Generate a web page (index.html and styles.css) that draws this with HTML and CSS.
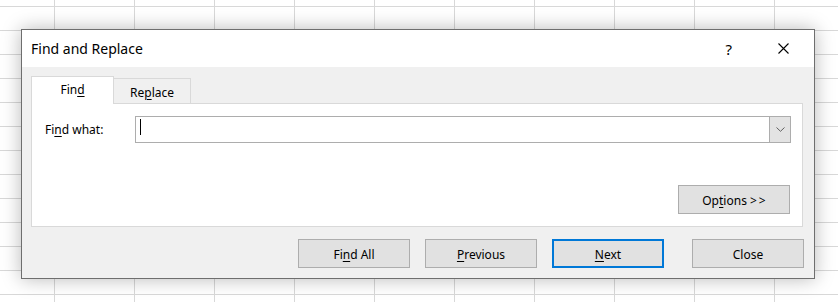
FILE: index.html
```html
<!doctype html>
<html lang="en">
<head>
    <meta charset="UTF-8">
    <title>Find and Replace</title>
    <link rel="stylesheet" href="styles.css">
</head>
<body>
    <div class="dialog">
        <div class="titlebar">
            <span class="title">Find and Replace</span>
            <span class="help">?</span>
            <svg class="close-x" viewBox="0 0 11 11" width="11" height="11">
                <path d="M0.5 0.5 L10.5 10.5 M10.5 0.5 L0.5 10.5" stroke="#000" stroke-width="1.1" fill="none"/>
            </svg>
        </div>

        <div class="content">
            <div class="tabs">
                <div class="tab active">Fin<u>d</u></div>
                <div class="tab">Re<u>p</u>lace</div>
            </div>
            <div class="panel">
                <div class="row">
                    <div class="label">Fi<u>n</u>d what:</div>
                    <div class="combo">
                        <div class="field"><span class="caret"></span></div>
                        <div class="drop">
                            <svg viewBox="0 0 9 5" width="9" height="5">
                                <path d="M0.5 0.5 L4.5 4.3 L8.5 0.5" stroke="#606060" stroke-width="1" fill="none"/>
                            </svg>
                        </div>
                    </div>
                </div>
                <button class="btn options">Op<u>t</u>ions <span class="arrows">&gt;&gt;</span></button>
            </div>
            <div class="actions">
                <button class="btn">Fi<u>n</u>d All</button>
                <button class="btn"><u>P</u>revious</button>
                <button class="btn default"><u>N</u>ext</button>
                <button class="btn close">Close</button>
            </div>
        </div>
    </div>
</body>
</html>
```

FILE: styles.css
```css
html, body {
    margin: 0;
    height: 100%;
}
body {
    font-family: "Noto Sans", "Open Sans", sans-serif;
    font-size: 12px;
    color: #000;
    overflow: hidden;
    background-color: #fff;
    background-image:
        linear-gradient(to right, #d8d8d8 1px, transparent 1px),
        linear-gradient(to bottom, #d8d8d8 1px, transparent 1px);
    background-size: 80px 100%, 100% 24px;
    background-position: 54px 0, 0 6px;
}
u {
    text-decoration-thickness: 1px;
    text-underline-offset: 2px;
}

/* dialog floats over the sheet */
.dialog {
    position: absolute;
    left: 21px;
    top: 29px;
    width: 794px;
    height: 250px;
    box-sizing: border-box;
    border: 1px solid #6e6e6e;
    background: #f0f0f0;
    box-shadow: 0 0 18px rgba(0, 0, 0, 0.28);
    display: flex;
    flex-direction: column;
}
.titlebar {
    height: 37px;
    flex: none;
    background: #fff;
    display: flex;
    align-items: center;
    padding: 0 25px 0 9px;
    font-size: 14px;
}
.titlebar .title {
    flex: 1;
}
.help {
    font-size: 15px;
    margin-right: 46px;
}
.close-x {
    display: block;
}

.content {
    flex: 1;
    padding: 9px 11px 0 9px;
    display: flex;
    flex-direction: column;
}
.tabs {
    display: flex;
    align-items: flex-end;
    position: relative;
    z-index: 1;
    margin-bottom: -1px;
}
.tab {
    box-sizing: border-box;
    width: 78px;
    height: 25px;
    margin-left: -1px;
    margin-bottom: 1px;
    border: 1px solid #d9d9d9;
    border-bottom: none;
    background: #f0f0f0;
    display: flex;
    align-items: center;
    justify-content: center;
    padding-top: 3px;
}
.tab.active {
    width: 83px;
    height: 28px;
    margin-left: 0;
    margin-bottom: 0;
    background: #fff;
    padding-top: 0;
    padding-bottom: 2px;
}

.panel {
    box-sizing: border-box;
    height: 124px;
    background: #fff;
    border: 1px solid #d9d9d9;
    padding: 12px 11px 12px 13px;
    display: flex;
    flex-direction: column;
}
.row {
    display: flex;
    align-items: center;
}
.label {
    width: 90px;
}
.combo {
    flex: 1;
    height: 27px;
    box-sizing: border-box;
    border: 1px solid #adadad;
    display: flex;
}
.field {
    flex: 1;
    padding: 2px 0 0 4px;
}
.caret {
    display: block;
    width: 1px;
    height: 16px;
    background: #000;
}
.drop {
    width: 20px;
    background: #e3e3e3;
    border-left: 1px solid #adadad;
    display: flex;
    align-items: center;
    justify-content: center;
}
.drop svg {
    display: block;
}

.btn {
    box-sizing: border-box;
    width: 112px;
    height: 29px;
    background: #e1e1e1;
    border: 1px solid #adadad;
    font-family: inherit;
    font-size: 12px;
    color: #000;
    padding: 2px 0 0;
}
.options {
    margin-top: auto;
    align-self: flex-end;
    margin-right: 1px;
}
.arrows {
    letter-spacing: 2px;
    margin-right: -2px;
}
.actions {
    display: flex;
    justify-content: flex-end;
    gap: 15px;
    margin-top: 12px;
    margin-right: -1px;
}
.default {
    border: 2px solid #0078d7;
}
.close {
    margin-left: 13px;
}
```
